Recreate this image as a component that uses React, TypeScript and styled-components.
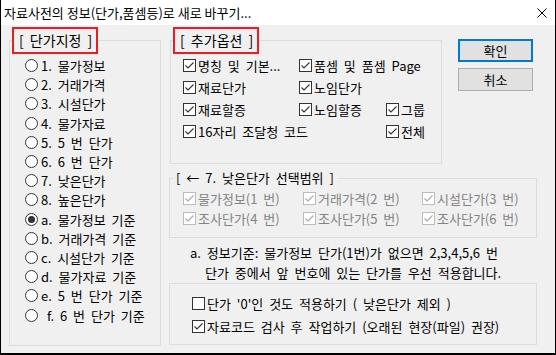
import React from 'react';
import styled, { createGlobalStyle } from 'styled-components';

const GlobalStyle = createGlobalStyle`
  html, body { margin: 0; padding: 0; background: #ffffff; }
  body {
    font-family: "Noto Sans CJK KR", "Noto Sans", sans-serif;
    font-size: 13px;
    word-spacing: 3px;
    color: #000;
  }
  * { box-sizing: border-box; }
`;

const Window = styled.div`
  width: 556px;
  height: 355px;
  background: #f0f0f0;
  border: 1px solid #000;
  border-top: none;
  border-bottom-width: 2px;
  display: flex;
  flex-direction: column;
`;

const TitleBar = styled.div`
  height: 25px;
  flex: none;
  background: #fff;
  display: flex;
  align-items: center;
  justify-content: space-between;
  padding: 0 8px 0 3px;
`;

const Title = styled.span`
  font-size: 13px;
  line-height: 16px;
  word-spacing: 0;
`;

const Body = styled.div`
  flex: 1;
  display: flex;
  gap: 8px;
  padding: 2px 0 0 8px;
`;

const Group = styled.fieldset<{ $w: number; $h: number }>`
  margin: 0;
  padding: 0;
  min-width: 0;
  width: ${p => p.$w}px;
  height: ${p => p.$h}px;
  border: 1px solid #dcdcdc;
`;

const RedLegend = styled.legend`
  margin-left: 2px;
  width: 86px;
  padding: 0 0 0 5px;
  border: 2px solid #ec1c24;
  font-size: 14px;
  line-height: 23px;
  white-space: pre;
`;

const PlainLegend = styled.legend`
  margin-left: 3px;
  padding: 0 3px;
  line-height: 16px;
  white-space: pre;
`;

const RadioList = styled.div`
  display: flex;
  flex-direction: column;
  padding: 2px 0 0 15px;
`;

const RadioRow = styled.label`
  height: 19.2px;
  display: flex;
  align-items: center;
  gap: 3px;
  white-space: pre;
`;

const RadioDot = styled.span<{ $on?: boolean }>`
  width: 13px;
  height: 13px;
  flex: none;
  border-radius: 50%;
  border: 1px solid #333;
  background: #fff;
  display: flex;
  align-items: center;
  justify-content: center;
  &::after {
    content: '';
    width: 7px;
    height: 7px;
    border-radius: 50%;
    background: ${p => (p.$on ? '#333' : 'transparent')};
  }
`;

const RightColumn = styled.div`
  display: flex;
  flex-direction: column;
`;

const TopRow = styled.div`
  display: flex;
  align-items: flex-start;
`;

const OptionsGroup = styled(Group)`
  margin-left: 1px;
`;

const CheckGrid = styled.div<{ $cols: string; $row: number; $pad: string }>`
  display: grid;
  grid-template-columns: ${p => p.$cols};
  grid-auto-rows: ${p => p.$row}px;
  padding: ${p => p.$pad};
`;

const CheckItem = styled.label<{ $off?: boolean; $span?: string }>`
  display: flex;
  align-items: center;
  gap: 2px;
  white-space: pre;
  color: ${p => (p.$off ? '#838383' : '#000')};
  grid-column: ${p => p.$span || 'auto'};
`;

const Box = styled.span<{ $off?: boolean }>`
  width: 13px;
  height: 13px;
  flex: none;
  border: 1px solid ${p => (p.$off ? '#bcbcbc' : '#333')};
  background: #fff;
  display: flex;
`;

const Buttons = styled.div`
  display: flex;
  flex-direction: column;
  gap: 6px;
  margin: 12px 0 0 16px;
`;

const Button = styled.button<{ $primary?: boolean }>`
  width: 75px;
  height: 23px;
  padding: 0;
  font-family: inherit;
  font-size: 13px;
  color: #000;
  background: #e1e1e1;
  border: ${p => (p.$primary ? '2px solid #0078d7' : '1px solid #adadad')};
`;

const RangeGroup = styled(Group)`
  margin-top: 6px;
`;

const Note = styled.div`
  margin-top: 5px;
  line-height: 20px;
  white-space: pre;
`;

const NoteLine = styled.div<{ $indent: number }>`
  padding-left: ${p => p.$indent}px;
`;

const Check: React.FC<{ on?: boolean; off?: boolean; children: React.ReactNode; span?: string }> = ({ on, off, children, span }) => (
  <CheckItem $off={off} $span={span}>
    <Box $off={off}>
      {on && (
        <svg width="11" height="11" viewBox="0 0 11 11">
          <polyline points="1.5,5.5 4,8 9.5,2.5" fill="none" stroke={off ? '#a8a8a8' : '#333'} strokeWidth="1.1" />
        </svg>
      )}
    </Box>
    {children}
  </CheckItem>
);

const radios = [
  '1. 물가정보', '2. 거래가격', '3. 시설단가', '4. 물가자료', '5. 5 번 단가', '6. 6 번 단가',
  '7. 낮은단가', '8. 높은단가', 'a. 물가정보 기준', 'b. 거래가격 기준', 'c. 시설단가 기준',
  'd. 물가자료 기준', 'e. 5 번 단가 기준', ' f. 6 번 단가 기준',
];

const ranges = ['물가정보(1 번)', '거래가격(2 번)', '시설단가(3 번)', '조사단가(4 번)', '조사단가(5 번)', '조사단가(6 번)'];

export default function App() {
  return (
    <>
      <GlobalStyle />
      <Window>
        <TitleBar>
          <Title>자료사전의 정보(단가,품셈등)로 새로 바꾸기...</Title>
          <svg width="10" height="10" viewBox="0 0 10 10">
            <path d="M0.5 0.5 L9.5 9.5 M9.5 0.5 L0.5 9.5" stroke="#000" strokeWidth="1" />
          </svg>
        </TitleBar>
        <Body>
          <Group $w={152} $h={319}>
            <RedLegend>[ 단가지정 ]</RedLegend>
            <RadioList>
              {radios.map((r, i) => (
                <RadioRow key={r}>
                  <RadioDot $on={i === 8} />
                  {r}
                </RadioRow>
              ))}
            </RadioList>
          </Group>
          <RightColumn>
            <TopRow>
              <OptionsGroup $w={272} $h={137}>
                <RedLegend>[ 추가옵션 ]</RedLegend>
                <CheckGrid $cols="116px 87px auto" $row={22} $pad="0 0 0 12px">
                  <Check on>명칭 및 기본...</Check>
                  <Check on span="2 / 4">품셈 및 품셈 Page</Check>
                  <Check on>재료단가</Check>
                  <Check on span="2 / 4">노임단가</Check>
                  <Check on>재료할증</Check>
                  <Check on>노임할증</Check>
                  <Check on>그룹</Check>
                  <Check on span="1 / 3">16자리 조달청 코드</Check>
                  <Check on>전체</Check>
                </CheckGrid>
              </OptionsGroup>
              <Buttons>
                <Button $primary>확인</Button>
                <Button>취소</Button>
              </Buttons>
            </TopRow>
            <RangeGroup $w={368} $h={68}>
              <PlainLegend>[ ← 7. 낮은단가 선택범위 ]</PlainLegend>
              <CheckGrid $cols="120px 119px auto" $row={20} $pad="2px 0 0 13px">
                {ranges.map((r, i) => (
                  <Check key={i} on off>{r}</Check>
                ))}
              </CheckGrid>
            </RangeGroup>
            <Note>
              <NoteLine $indent={21}>a. 정보기준: 물가정보 단가(1번)가 없으면 2,3,4,5,6 번</NoteLine>
              <NoteLine $indent={36}>단가 중에서 앞 번호에 있는 단가를 우선 적용합니다.</NoteLine>
            </Note>
            <Group $w={368} $h={62}>
              <CheckGrid $cols="auto" $row={23} $pad="8px 0 0 22px">
                <Check>단가 '0'인 것도 적용하기 ( 낮은단가 제외 )</Check>
                <Check on>자료코드 검사 후 작업하기 (오래된 현장(파일) 권장)</Check>
              </CheckGrid>
            </Group>
          </RightColumn>
        </Body>
      </Window>
    </>
  );
}
